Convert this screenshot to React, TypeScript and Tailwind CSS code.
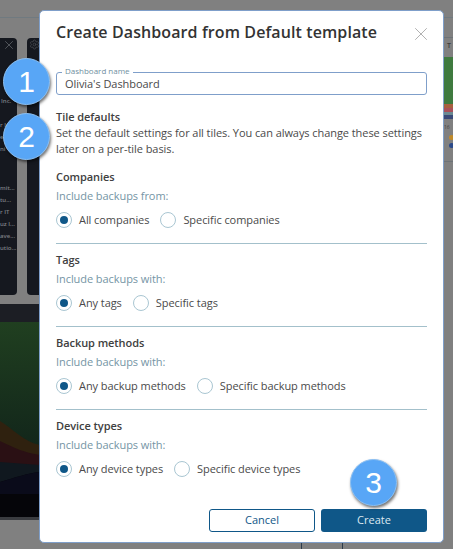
import { X, Settings } from "lucide-react";

const sections = [
  { title: "Companies", hint: "Include backups from:", any: "All companies", specific: "Specific companies" },
  { title: "Tags", hint: "Include backups with:", any: "Any tags", specific: "Specific tags" },
  { title: "Backup methods", hint: "Include backups with:", any: "Any backup methods", specific: "Specific backup methods" },
  { title: "Device types", hint: "Include backups with:", any: "Any device types", specific: "Specific device types" },
];

const companies = ["mit...", "tu...", "r IT", "uz I...", "ave...", "utio..."];

function Radio({ checked, label }: { checked?: boolean; label: string }) {
  return (
    <label className="flex items-center gap-[7px]">
      <span className="flex h-4 w-4 items-center justify-center rounded-full border border-[#a9c6d2] bg-white">
        {checked && <span className="h-2 w-2 rounded-full bg-[#0f5788]" />}
      </span>
      <span className="text-[11px] tracking-[-0.065px] text-[#4a4a4a]">{label}</span>
    </label>
  );
}

function Badge({ n, className }: { n: number; className: string }) {
  return (
    <div
      className={`absolute flex h-[47px] w-[47px] items-center justify-center rounded-full border border-[#8cc0f2] bg-[#58a6f6] font-['Liberation_Sans',sans-serif] text-[30px] text-white shadow-[1px_2px_3px_rgba(0,0,0,0.55)] ${className}`}
    >
      {n}
    </div>
  );
}

function Backdrop() {
  return (
    <div className="flex h-full">
      {/* left side of the dashboard, dimmed */}
      <div className="flex h-full w-10 flex-col">
        <div className="h-[18px] border-b border-[#707a80]" />
        <div className="flex h-[277px] gap-[10px] pt-5">
          <div className="relative h-full w-[17px] rounded-r-[4px] bg-[#15181f] text-[6px] font-semibold leading-[12px] text-[#7d8086]">
            <X className="absolute left-[2px] top-0 h-[14px] w-[14px] text-[#7c7f84]" strokeWidth={1} />
            <div className="pl-[1px] pt-[57px]">Inc.</div>
            <div className="pt-[12px]">r I</div>
            <div>e</div>
            <div>ni</div>
            <div className="pt-[27px]">
              {companies.map((c) => (
                <div key={c}>{c}</div>
              ))}
            </div>
          </div>
          <div className="relative h-full w-[13px] rounded-l-[4px] bg-[#15181f]">
            <Settings className="absolute left-[2px] top-[1px] h-[11px] w-[11px] text-[#4c4f55]" strokeWidth={1.5} />
          </div>
        </div>
        <div className="mt-[9px] h-[18px] bg-[#1c1e24]" />
        <svg viewBox="0 0 40 198" className="block h-[198px] w-10" preserveAspectRatio="none">
          <defs>
            <linearGradient id="green" x1="0" y1="0" x2="0" y2="1">
              <stop offset="0" stopColor="#203f20" />
              <stop offset="1" stopColor="#11241a" />
            </linearGradient>
          </defs>
          <rect width="40" height="195" fill="#050509" />
          <rect width="40" height="135" fill="url(#green)" />
          <path d="M0 99 C12 106 24 120 40 123 V140 H0Z" fill="#2f210f" />
          <path d="M0 119 C14 126 26 131 40 133 V145 H0Z" fill="#2a1014" />
          <path d="M0 140 L40 143 V150 C28 151 14 156 0 160Z" fill="#10181f" />
          <path d="M0 160 C14 156 28 151 40 150 V172 H0Z" fill="#0a0b1a" />
          <rect y="195" width="40" height="3" fill="#3a3c40" />
        </svg>
      </div>
      <div className="flex-1" />
      {/* right side of the dashboard, dimmed */}
      <div className="flex h-full w-[10px] flex-col">
        <div className="h-[18px] border-b border-[#707a80]" />
        <div className="h-[20px] border-b border-[#6d7378]" />
        <div className="h-[19px] pl-1 pt-[3px] text-[7px] font-semibold leading-[10px] text-[#3c3c3c]">T</div>
        <div className="h-[47px] bg-[#3f7a3f]" />
        <div className="h-[4px] bg-[#a8603f]" />
        <div className="h-[4px] bg-[#a9505a]" />
        <div className="h-[3px] bg-[#6b8a92]" />
        <div className="h-[4px] bg-[#3a4a78]" />
        <div className="h-[43px] border-b border-[#6d7378] pl-[1px] pt-[5px] text-[5px] leading-[6px] text-[#444]">
          16
          <div className="mt-[5px] ml-[5px] h-[5px] w-[5px] rounded-full bg-[#c08a2a]" />
          <div className="mt-[3px] ml-[5px] h-[5px] w-[5px] rounded-full bg-[#2b4a8a]" />
        </div>
      </div>
    </div>
  );
}

export default function App() {
  return (
    <div className="relative h-[549px] w-[453px] overflow-hidden bg-[#808080] font-['Open_Sans',sans-serif]">
      <Backdrop />

      {/* lines under the modal */}
      <div className="absolute left-[301px] top-[542px] h-[7px] w-px bg-[#2b3a4a]" />
      <div className="absolute left-[342px] top-[542px] h-[7px] w-px bg-[#2b3a4a]" />

      {/* Modal */}
      <div className="absolute left-[39px] top-[10px] flex h-[533px] w-[405px] flex-col rounded-[5px] border border-[#7f9fca] bg-white px-4 pt-[9px]">
        <div className="flex h-[24px] items-center justify-between">
          <h1 className="text-[16px] font-semibold leading-[24px] tracking-[0.1px] text-[#333333]">
            Create Dashboard from Default template
          </h1>
          <X className="mr-[-5px] mt-[3px] h-[22px] w-[22px] text-[#a0a0a0]" strokeWidth={0.9} />
        </div>

        <div className="relative mt-[28px] flex h-[23px] items-center rounded-[3px] border border-[#7f9fca] px-2">
          <span className="absolute left-[5px] top-[-7px] bg-white px-[3px] text-[8px] leading-[9px] text-[#6f8fa0]">
            Dashboard name
          </span>
          <span className="text-[11px] leading-[13px] tracking-[-0.065px] text-[#4a4a4a]">Olivia's Dashboard</span>
        </div>

        <h2 className="mt-[14px] text-[11px] font-semibold leading-[16px] tracking-[-0.065px] text-[#404040]">Tile defaults</h2>
        <p className="text-[11px] leading-[16px] tracking-[-0.065px] text-[#4a4a4a]">
          Set the default settings for all tiles. You can always change these settings later on a per-tile basis.
        </p>

        <div className="mt-[12px] flex flex-col">
          {sections.map((s, i) => (
            <section key={s.title} className={i > 0 ? "border-t border-[#a3c0cb] pt-[8px]" : ""}>
              <h3 className="text-[11px] font-semibold leading-[16px] tracking-[-0.065px] text-[#404040]">{s.title}</h3>
              <p className="mt-[3px] text-[11px] leading-[16px] tracking-[-0.065px] text-[#7595a5]">{s.hint}</p>
              <div className="mt-[8px] flex h-4 items-center gap-[11px]">
                <Radio checked label={s.any} />
                <Radio label={s.specific} />
              </div>
              <div className="h-[15px]" />
            </section>
          ))}
        </div>

        <div className="absolute bottom-[10px] right-[16px] flex gap-[6px]">
          <button className="h-[23px] w-[106px] rounded-[3px] border border-[#0f5788] bg-white text-[11px] text-[#0f5788]">
            Cancel
          </button>
          <button className="h-[23px] w-[106px] rounded-[3px] bg-[#0f5788] text-[11px] text-[#dce8f0]">Create</button>
        </div>
      </div>

      <Badge n={1} className="left-[3px] top-[58px]" />
      <Badge n={2} className="left-[3px] top-[113px]" />
      <Badge n={3} className="left-[350px] top-[459px]" />
    </div>
  );
}
